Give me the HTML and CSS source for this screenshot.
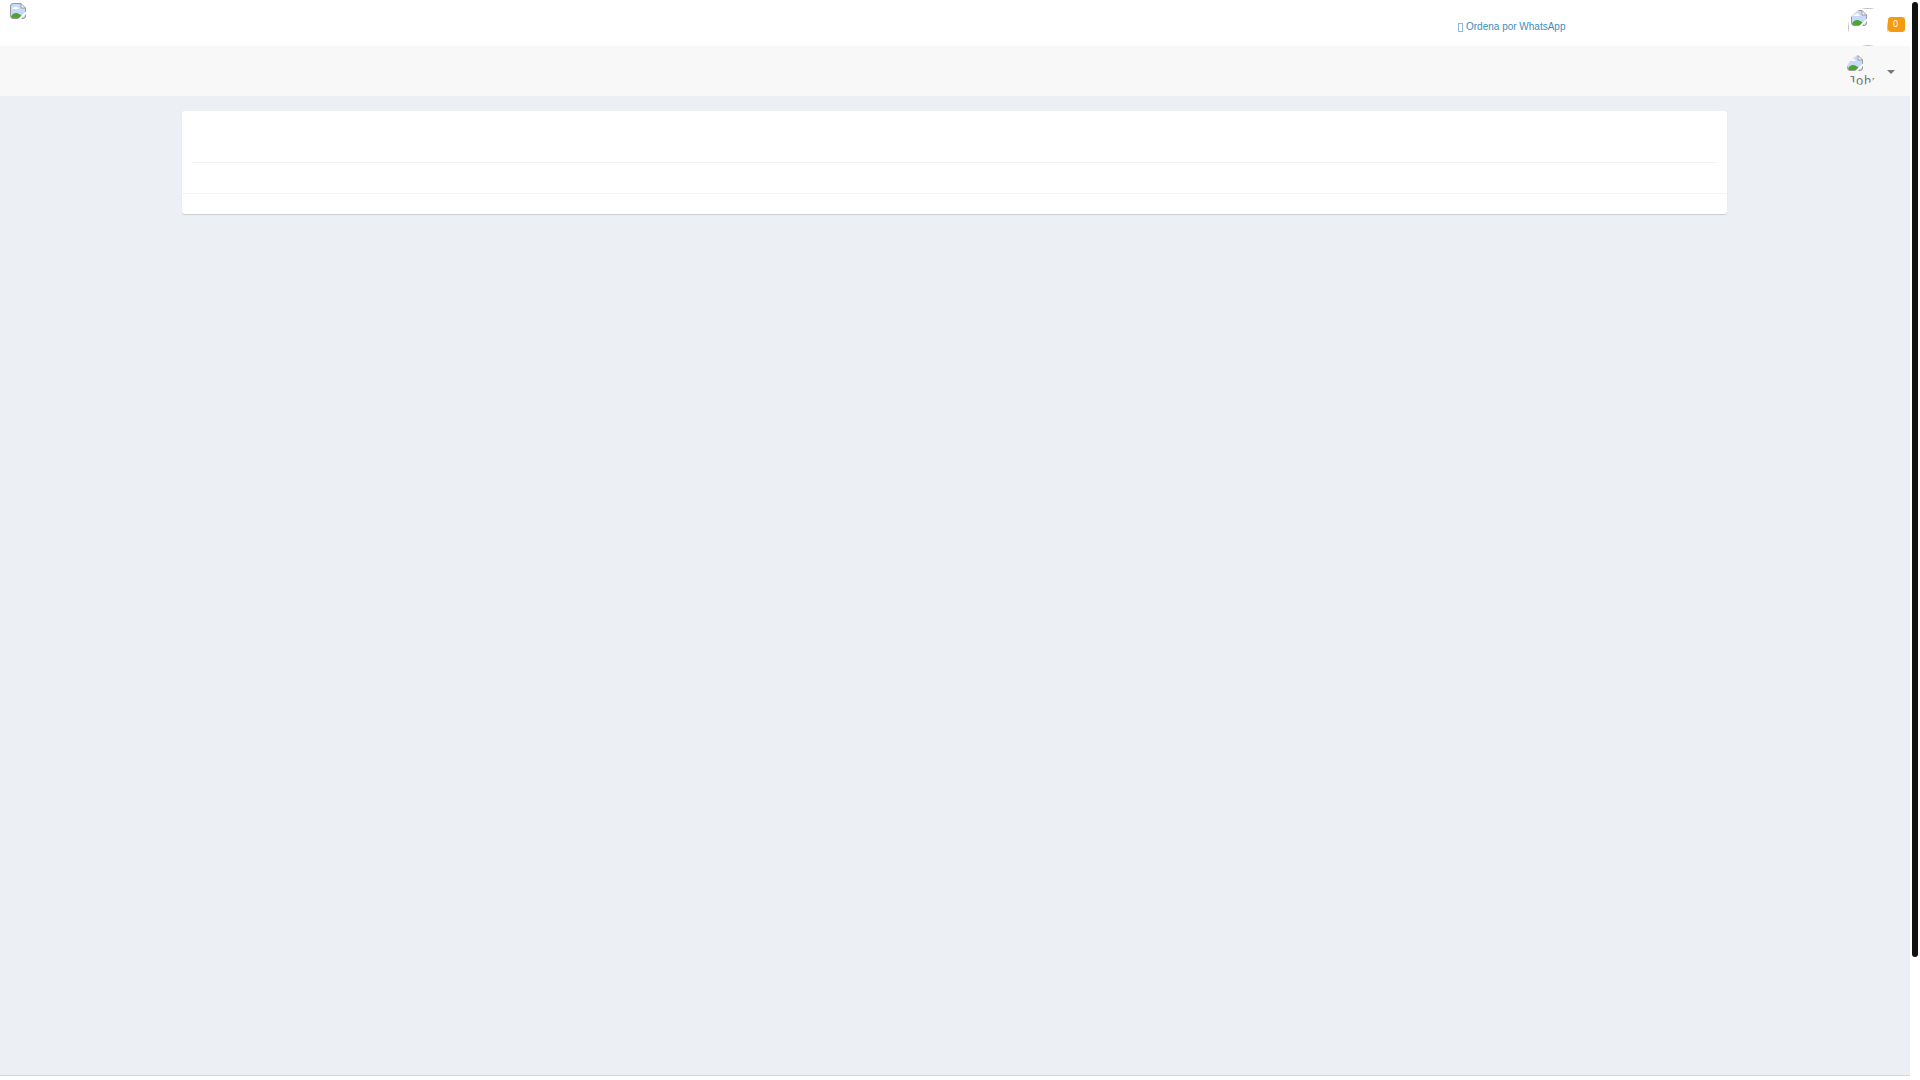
FILE: index.html
```
<!DOCTYPE html>
<html lang="es">
  <head>
    <meta charset="UTF-8" />
    <title>Ordena por WhatsApp</title>
    <link rel="stylesheet" href="styles.css">
  </head>
  <body>
    <svg class="symbols" aria-hidden="true">
      <symbol id="broken" viewBox="0 0 16 16">
        <path d="M3 .5h8l4.500 4.500v8a2.500 2.500 0 0 1-2.500 2.500h-10a2.500 2.500 0 0 1-2.500-2.500v-10a2.500 2.500 0 0 1 2.500-2.500z" fill="#c8dafa" />
        <path d="M2.500 6c0-1.500 1-2 2-1.500.500-1.500 2.500-1.500 3 0 1.500 0 1.500 1.500.500 1.500z" fill="#fff" />
        <path d="M1 14c1-3 3-4 5-4s5 2 7 4l-1 1.500H2.500z" fill="#4ba52e" />
        <path d="M11 .500v4.500h4.500z" fill="#fff" />
        <path d="M3 .5h8l4.500 4.500v8a2.500 2.500 0 0 1-2.500 2.500h-10a2.500 2.500 0 0 1-2.500-2.500v-10a2.500 2.500 0 0 1 2.500-2.500zM11 .500v4.500h4.500" fill="none" stroke="#9a9a9a" />
        <path d="M8 16l8-7.500v2.500l-5 5z" fill="#fff" />
      </symbol>
    </svg>

    <div class="page">
      <header class="topbar">
        <a class="logo" href="#" aria-label="Inicio"><svg class="broken"><use href="#broken" /></svg></a>
        <a class="order" href="#"><span class="glyph"></span>Ordena por WhatsApp</a>
        <a class="cart" href="#">
          <svg class="cart-image"><rect x="0.500" y="0.500" width="39" height="37" /><use href="#broken" x="3" y="2" width="16" height="16" /></svg>
          <span class="badge">0</span>
        </a>
      </header>

      <nav class="navbar">
        <button class="user" type="button">
          <span class="avatar"><svg class="broken"><use href="#broken" /></svg><span class="alt">John</span></span>
          <span class="caret"></span>
        </button>
      </nav>

      <main class="content">
        <section class="box">
          <div class="box-header"></div>
          <div class="box-body"></div>
          <div class="box-footer"></div>
        </section>
      </main>

      <footer class="footer"></footer>
    </div>
    <div class="scroll-thumb"></div>
  </body>
</html>
```
FILE: styles.css
```
* {
  box-sizing: border-box;
}
body {
  margin: 0;
  background-color: #fff;
  font-family: "Liberation Sans", Arial, sans-serif;
  overflow: hidden;
}
a {
  color: #3c8dbc;
  text-decoration: none;
}
.symbols {
  position: absolute;
  width: 0;
  height: 0;
}
.page {
  display: flex;
  flex-direction: column;
  min-height: 100vh;
  margin-right: 10px;
}
.broken {
  display: block;
  width: 16px;
  height: 16px;
}
.topbar {
  display: flex;
  align-items: flex-start;
  height: 46px;
  padding: 3px 5px 0 10px;
}
.logo {
  flex: 1;
}
.order {
  display: flex;
  align-items: center;
  gap: 3px;
  width: 390px;
  margin-top: 18px;
  font-size: 10px;
  line-height: 12px;
}
.glyph {
  width: 5px;
  height: 9px;
  border: 1px solid #8dbcd8;
}
.cart {
  display: flex;
  width: 57px;
  margin-top: 5px;
}
.cart-image {
  width: 40px;
  height: 38px;
  flex: none;
  border-radius: 50%;
}
.cart-image rect {
  fill: none;
  stroke: #c0c0c0;
}
.badge {
  width: 17px;
  height: 15px;
  margin-top: 9px;
  padding-right: 2px;
  border-radius: 3px;
  background-color: #f39c12;
  color: #fff;
  font-family: "Open Sans", sans-serif;
  font-size: 9px;
  line-height: 14px;
  text-align: center;
}
.navbar {
  display: flex;
  justify-content: flex-end;
  height: 50px;
  padding: 9px 15px 0 0;
  background-color: #f8f8f8;
}
.user {
  display: flex;
  align-items: flex-start;
  gap: 10px;
  padding: 0;
  border: 0;
  background: none;
  color: #777;
}
.avatar {
  width: 30px;
  height: 30px;
  border-radius: 50%;
  overflow: hidden;
  text-align: left;
}
.alt {
  display: block;
  padding-left: 1px;
  font-family: "DejaVu Sans Mono", monospace;
  font-size: 13px;
  line-height: 20px;
}
.caret {
  margin-top: 15px;
  border-top: 4px solid #777;
  border-left: 4px solid transparent;
  border-right: 4px solid transparent;
}
.content {
  flex: 1;
  padding: 15px 183px 0 182px;
  background-color: #ecf0f5;
}
.box {
  border-radius: 3px;
  background-color: #fff;
  box-shadow: 0 1px 1px rgba(0, 0, 0, 0.15);
}
.box-header {
  height: 52px;
  margin: 0 10px;
  border-bottom: 1px solid #f4f4f4;
}
.box-body {
  height: 30px;
}
.box-footer {
  height: 21px;
  border-top: 1px solid #f4f4f4;
}
.footer {
  height: 5px;
  border-top: 1px solid #d2d6de;
  background-color: #fff;
}
.scroll-thumb {
  position: fixed;
  top: 2px;
  right: 2px;
  width: 6px;
  height: 955px;
  border-radius: 3px;
  background-color: #111;
}
```
